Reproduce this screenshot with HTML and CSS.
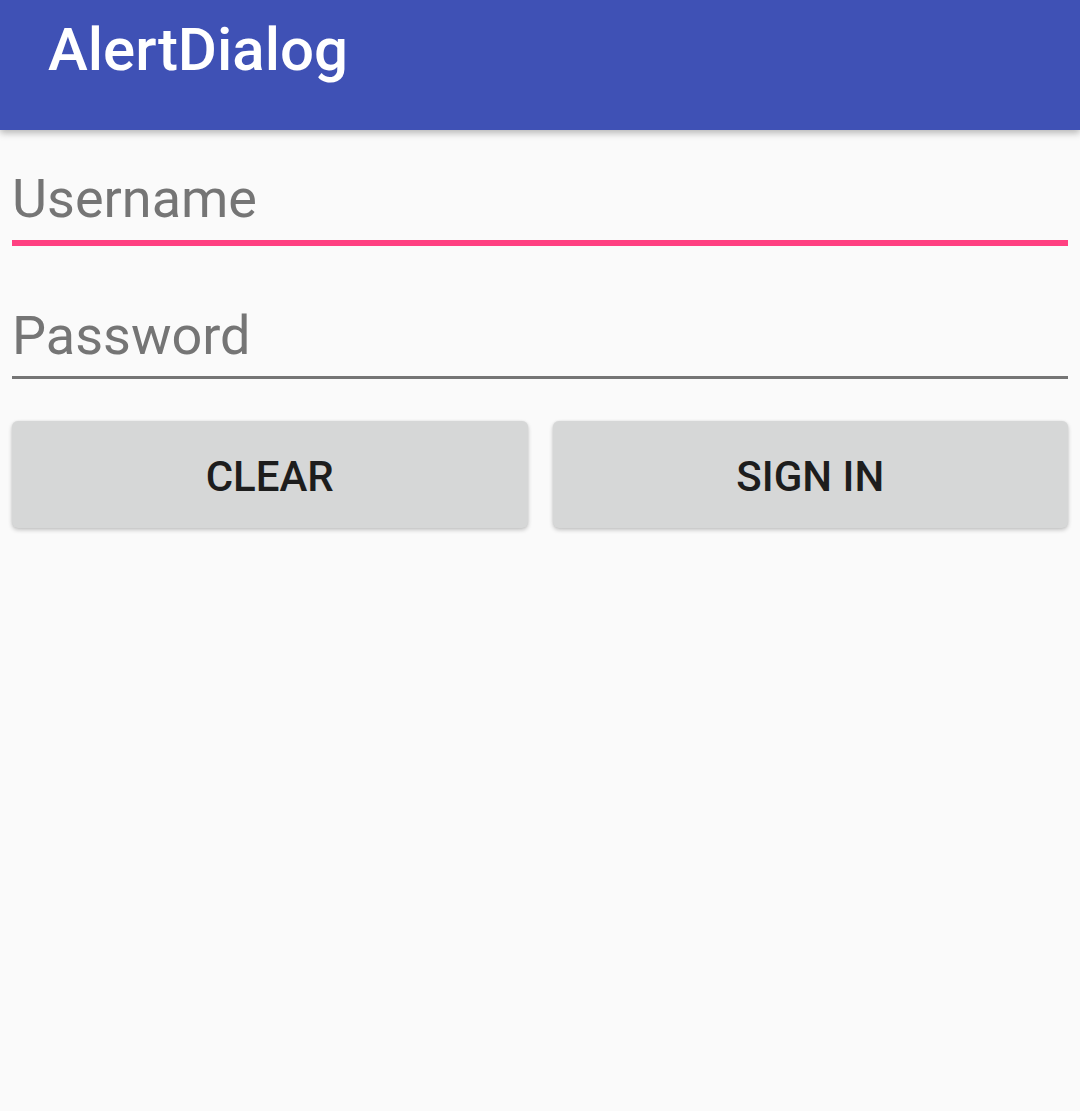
FILE: index.html
```html
<!DOCTYPE html>
<html>
<head>
<meta charset="utf-8">
<link rel="stylesheet" href="styles.css">
</head>
<body>
<header class="appbar">
  <h1 class="title">AlertDialog</h1>
</header>
<main class="content">
  <div class="field field-focused">Username</div>
  <div class="field field-normal">Password</div>
  <div class="buttons">
    <button class="btn">CLEAR</button>
    <button class="btn">SIGN IN</button>
  </div>
</main>
</body>
</html>
```
FILE: styles.css
```css
html, body {
  margin: 0;
  padding: 0;
  background: #fafafa;
  font-family: Roboto, "Noto Sans", sans-serif;
}
body {
  width: 1080px;
  height: 1111px;
  overflow: hidden;
}
.appbar {
  position: relative;
  z-index: 2;
  height: 130px;
  background: #3f51b5;
  box-shadow: 0 3px 7px rgba(0, 0, 0, 0.28);
  padding-left: 48px;
  box-sizing: border-box;
}
.title {
  margin: 0;
  padding-top: 14px;
  font-size: 60px;
  font-weight: 500;
  color: #ffffff;
  line-height: normal;
}
.content {
  display: flex;
  flex-direction: column;
  padding: 0 12px;
}
.field {
  font-size: 54px;
  line-height: 64px;
  height: 64px;
  color: #757575;
  padding-left: 0;
}
.field-focused {
  margin-top: 37px;
  padding-bottom: 9px;
  border-bottom: 6px solid #ff4081;
}
.field-normal {
  margin-top: 58px;
  padding-bottom: 8px;
  border-bottom: 3px solid #757575;
}
.buttons {
  display: flex;
  gap: 25px;
  margin-top: 42px;
}
.btn {
  flex: 1;
  height: 107px;
  border: none;
  border-radius: 6px;
  background: #d6d7d7;
  box-shadow: 0 2px 4px rgba(0, 0, 0, 0.22), 0 0 2px rgba(0, 0, 0, 0.08);
  font-family: Roboto, "Noto Sans", sans-serif;
  font-size: 42px;
  font-weight: 500;
  color: #1d1d1d;
  padding: 3px 0 0 0;
  display: flex;
  align-items: center;
  justify-content: center;
}
```
